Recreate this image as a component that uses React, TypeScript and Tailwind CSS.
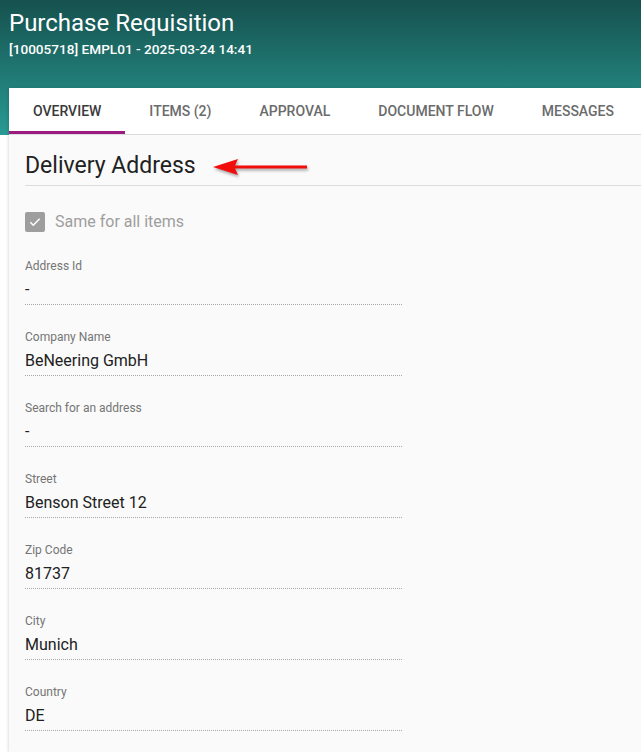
import React from "react";

const TABS = ["Overview", "Items (2)", "Approval", "Document Flow", "Messages"];

const FIELDS: { label: string; value: string }[] = [
  { label: "Address Id", value: "-" },
  { label: "Company Name", value: "BeNeering GmbH" },
  { label: "Search for an address", value: "-" },
  { label: "Street", value: "Benson Street 12" },
  { label: "Zip Code", value: "81737" },
  { label: "City", value: "Munich" },
  { label: "Country", value: "DE" },
];

export default function App() {
  return (
    <div className="relative h-[752px] w-[641px] overflow-hidden bg-white font-['Roboto',sans-serif]">
      <div className="h-[135px] bg-gradient-to-b from-[#16514e] to-[#289b94] px-[9px] pt-[8px]">
        <div className="text-[24px] leading-[30px] text-white">Purchase Requisition</div>
        <div className="mt-[2px] text-[13.6px] font-medium leading-[18px] text-white">
          [10005718] EMPL01 - 2025-03-24 14:41
        </div>
      </div>

      <div className="absolute left-[9px] right-0 top-[88px] bottom-0 rounded-tl-[4px] bg-[#fafafa] shadow-[-1px_0_3px_rgba(0,0,0,0.12)]">
        <div className="flex h-[47px] border-b border-[#dcdcdc] bg-white">
          {TABS.map((t, i) => (
            <div
              key={t}
              className={[
                "flex items-center px-[24px] text-[14px] font-medium uppercase",
                i === 0 ? "border-b-[3px] border-[#9b1b80] pt-[3px] text-[#3a3a3a]" : "text-[#6b6b6b]",
              ].join(" ")}
            >
              {t}
            </div>
          ))}
        </div>

        <div className="pl-[16px]">
          <div className="flex items-center border-b border-[#dcdcdc] pt-[16px] pb-[5px]">
            <span className="text-[23px] leading-[29px] text-[#212121]">Delivery Address</span>
            <RedArrow />
          </div>

          <div className="mt-[24px] flex items-center gap-[10px]">
            <div className="flex h-[20px] w-[20px] items-center justify-center rounded-[2px] bg-[#9e9e9e]">
              <svg width="14" height="14" viewBox="0 0 24 24" fill="none">
                <path d="M4 12.5l5 5L20 6.5" stroke="white" strokeWidth="2.6" />
              </svg>
            </div>
            <span className="text-[16px] text-[#9e9e9e]">Same for all items</span>
          </div>

          <div className="mt-[24px] flex w-[377px] flex-col gap-[24px]">
            {FIELDS.map((f) => (
              <div key={f.label}>
                <div className="text-[12px] leading-[16px] text-[#757575]">{f.label}</div>
                <div className="mt-[5px] border-b border-dotted border-[#a8a8a8] pb-[3px] text-[16px] leading-[22px] text-[#212121]">
                  {f.value}
                </div>
              </div>
            ))}
          </div>
        </div>
      </div>
    </div>
  );
}

function RedArrow() {
  return (
    <svg width="100" height="20" viewBox="0 0 100 20" className="ml-[15px] mt-[2px] drop-shadow-[1px_2px_1.5px_rgba(0,0,0,0.35)]">
      <path d="M2 10 L27 2 L24 8.5 L96 8.5 L96 11.5 L24 11.5 L27 18 Z" fill="#f20d0d" />
    </svg>
  );
}
